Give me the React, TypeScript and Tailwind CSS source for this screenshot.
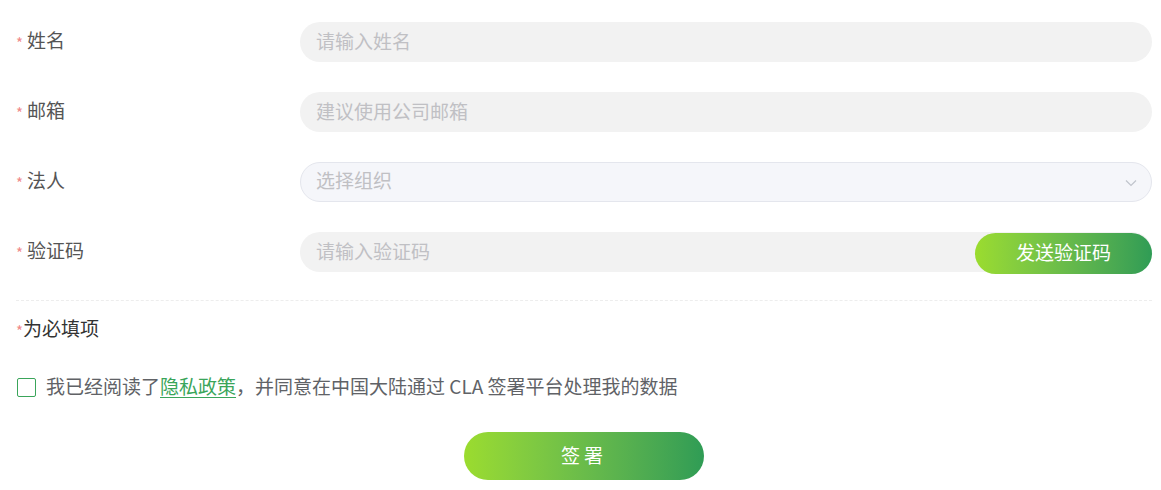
const font = { fontFamily: '"Noto Sans CJK SC", "Liberation Sans", sans-serif' };

function Label({ text }: { text: string }) {
  return (
    <div className="w-[284px] shrink-0 flex items-center text-[19px] text-[#555] pb-[3px]">
      <span className="text-[#f08a8a] text-[15px] mr-[4px] mt-[5px]">*</span>
      {text}
    </div>
  );
}

export default function App() {
  return (
    <div className="w-[1161px] h-[490px] bg-white pl-[16px] pr-[9px] pt-[22px]" style={font}>
      {/* Name */}
      <div className="flex items-center h-[40px] mb-[30px]">
        <Label text="姓名" />
        <input
          placeholder="请输入姓名"
          className="flex-1 h-[40px] rounded-full bg-[#f2f2f2] px-[16px] pb-[3px] text-[19px] outline-none placeholder:text-[#c0c0c4]"
        />
      </div>

      {/* Email */}
      <div className="flex items-center h-[40px] mb-[30px]">
        <Label text="邮箱" />
        <input
          placeholder="建议使用公司邮箱"
          className="flex-1 h-[40px] rounded-full bg-[#f2f2f2] px-[16px] pb-[3px] text-[19px] outline-none placeholder:text-[#c0c0c4]"
        />
      </div>

      {/* Legal person */}
      <div className="flex items-center h-[40px] mb-[30px]">
        <Label text="法人" />
        <div className="flex-1 h-[40px] rounded-full bg-[#f5f6fa] border border-[#e4e6ed] pl-[15px] pr-[14px] flex items-center justify-between">
          <span className="text-[19px] text-[#c0c0c4] pb-[3px]">选择组织</span>
          <svg width="12" height="8" viewBox="0 0 12 8" fill="none" stroke="#c0c4cc" strokeWidth="1.2" className="mt-[2px]">
            <polyline points="1,1.5 6,6.5 11,1.5" />
          </svg>
        </div>
      </div>

      {/* Code */}
      <div className="flex items-center h-[40px]">
        <Label text="验证码" />
        <div className="flex-1 h-[40px] rounded-full bg-[#f2f2f2] flex items-center">
          <input
            placeholder="请输入验证码"
            className="flex-1 h-full bg-transparent px-[16px] pb-[3px] text-[19px] outline-none placeholder:text-[#c0c0c4]"
          />
          <button className="w-[177px] h-[41px] mt-[2px] pb-[2px] rounded-full bg-gradient-to-r from-[#9bdc2e] to-[#2f9c55] text-white text-[19px]">
            发送验证码
          </button>
        </div>
      </div>

      <div className="mt-[28px] border-t border-dashed border-[#ededed]" />

      <div className="mt-[13px] flex items-center text-[19px] text-[#333]">
        <span className="text-[#f08a8a] text-[15px] mt-[5px]">*</span>为必填项
      </div>

      <div className="mt-[29px] flex items-center text-[19px] text-[#606266]">
        <div className="w-[19px] h-[19px] border border-solid border-[#3aa55a] rounded-[2px] ml-[1px] mr-[10px] mt-[3px] shrink-0" />
        我已经阅读了
        <a className="text-[#3aa55a] underline underline-offset-[3px]">隐私政策</a>
        ，并同意在中国大陆通过 CLA 签署平台处理我的数据
      </div>

      <div className="mt-[32px] flex justify-center">
        <button className="w-[240px] h-[48px] pb-[2px] rounded-full bg-gradient-to-r from-[#9bdc2e] to-[#2f9c55] text-white text-[19px] tracking-[4px]">
          签署
        </button>
      </div>
    </div>
  );
}
